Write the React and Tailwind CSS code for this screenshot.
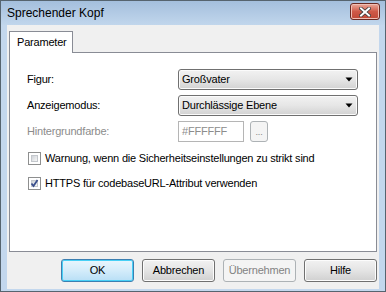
import React from "react";

function Chevron() {
  return (
    <svg width="8" height="5" viewBox="0 0 8 5" className="shrink-0">
      <path d="M0.5 0.5 L7.5 0.5 L4 4.5 Z" fill="#000" />
    </svg>
  );
}

function Select({ value }) {
  return (
    <div className="w-[180px] h-[21px] rounded-[3px] border border-[#707070] flex items-center justify-between pl-[3px] pr-[4px] bg-linear-to-b from-[#f2f2f2] via-[#e6e6e6] to-[#d2d2d2] shadow-[inset_0_0_0_1px_#fbfbfb]">
      <span className="text-[11px] tracking-[-0.2px] text-black leading-none">{value}</span>
      <Chevron />
    </div>
  );
}

function Checkbox({ checked }) {
  return (
    <div className="w-[13px] h-[13px] border border-[#8e8f8f] bg-white p-[2px] shrink-0 relative">
      <div className="w-full h-full border border-[#c3c7cc] bg-linear-to-br from-[#cfd3d8] to-[#f7f7f7]" />
      {checked && (
        <svg width="11" height="11" viewBox="0 0 11 11" className="absolute left-0 top-0">
          <path d="M2.5 5.5 L4.5 8 L8.5 2" stroke="#3a4f8c" strokeWidth="1.8" fill="none" />
        </svg>
      )}
    </div>
  );
}

function Button({ children, primary, disabled }) {
  const base = "w-[73px] h-[23px] rounded-[3px] flex items-center justify-center text-[11px] tracking-[-0.2px] leading-none";
  if (primary)
    return (
      <div className={base + " border border-[#3c7fb1] bg-linear-to-b from-[#e9f6fd] via-[#d4ecfa] to-[#b8dff6] shadow-[inset_0_0_0_1px_#48d0f6] text-black"}>
        {children}
      </div>
    );
  if (disabled)
    return (
      <div className={base + " border border-[#adb2b5] bg-[#f4f4f4] text-[#838383]"}>{children}</div>
    );
  return (
    <div className={base + " border border-[#707070] bg-linear-to-b from-[#f2f2f2] via-[#e4e4e4] to-[#d0d0d0] shadow-[inset_0_0_0_1px_#fcfcfc] text-black"}>
      {children}
    </div>
  );
}

export default function App() {
  return (
    <div className="w-[386px] h-[292px] border border-[#56646f] bg-[#c3d7ed] flex flex-col font-['Liberation_Sans',Arial,sans-serif]">
      <div className="h-[24px] shrink-0 flex items-center justify-between pl-[6px] pr-[5px] bg-linear-to-b from-[#a4bfdd] to-[#c1d6ec]">
        <span className="text-[12px] text-black leading-none">Sprechender Kopf</span>
        <div className="w-[30px] h-[17px] mt-[-3px] rounded-[3px] border border-[#6b2a22] bg-linear-to-b from-[#e9a99b] via-[#cf5a48] to-[#c04836] flex items-center justify-center shadow-[inset_0_0_0_1px_#f0bfb4]">
          <svg width="12" height="10" viewBox="0 0 12 10">
            <path d="M2 1.5 L10 8.5 M10 1.5 L2 8.5" stroke="#3a3a3a" strokeWidth="3.6" strokeLinecap="square" />
            <path d="M2 1.5 L10 8.5 M10 1.5 L2 8.5" stroke="#ffffff" strokeWidth="2" strokeLinecap="square" />
          </svg>
        </div>
      </div>
      <div className="flex-1 mx-[6px] mb-[2px] bg-[#f0f0f0] flex flex-col px-[2px] pt-[6px] pb-[6px]">
        <div className="flex">
          <div className="h-[22px] w-[64px] pl-[7px] bg-white border border-b-0 border-[#898c95] flex items-center text-[11px] tracking-[-0.2px] text-black leading-none relative z-10 mb-[-1px]">
            Parameter
          </div>
        </div>
        <div className="h-[200px] bg-white border border-[#898c95] flex flex-col pl-[17px] pr-[18px] pt-[16px] text-[11px] tracking-[-0.2px]">
          <div className="flex items-center justify-between">
            <span className="text-black leading-none">Figur:</span>
            <Select value="Großvater" />
          </div>
          <div className="flex items-center justify-between mt-[5px]">
            <span className="text-black leading-none">Anzeigemodus:</span>
            <Select value="Durchlässige Ebene" />
          </div>
          <div className="flex items-center justify-between mt-[5px]">
            <span className="text-[#8c8c8c] leading-none">Hintergrundfarbe:</span>
            <div className="w-[180px] flex items-center gap-[6px]">
              <div className="w-[66px] h-[21px] border border-[#b5b5b5] bg-white flex items-center px-[3px] text-[#8c8c8c] leading-none">
                #FFFFFF
              </div>
              <div className="w-[18px] h-[21px] rounded-[3px] border border-[#adb2b5] bg-[#f4f4f4] flex items-end justify-center pb-[4px] text-[9px] text-[#838383] leading-none">
                ...
              </div>
            </div>
          </div>
          <div className="flex items-center gap-[4px] mt-[10px] ml-[1px]">
            <Checkbox />
            <span className="text-black leading-none">Warnung, wenn die Sicherheitseinstellungen zu strikt sind</span>
          </div>
          <div className="flex items-center gap-[4px] mt-[12px] ml-[1px]">
            <Checkbox checked />
            <span className="text-black leading-none">HTTPS für codebaseURL-Attribut verwenden</span>
          </div>
        </div>
        <div className="flex justify-end gap-[8px] mt-[7px]">
          <Button primary>OK</Button>
          <Button>Abbrechen</Button>
          <Button disabled>Übernehmen</Button>
          <Button>Hilfe</Button>
        </div>
      </div>
    </div>
  );
}
